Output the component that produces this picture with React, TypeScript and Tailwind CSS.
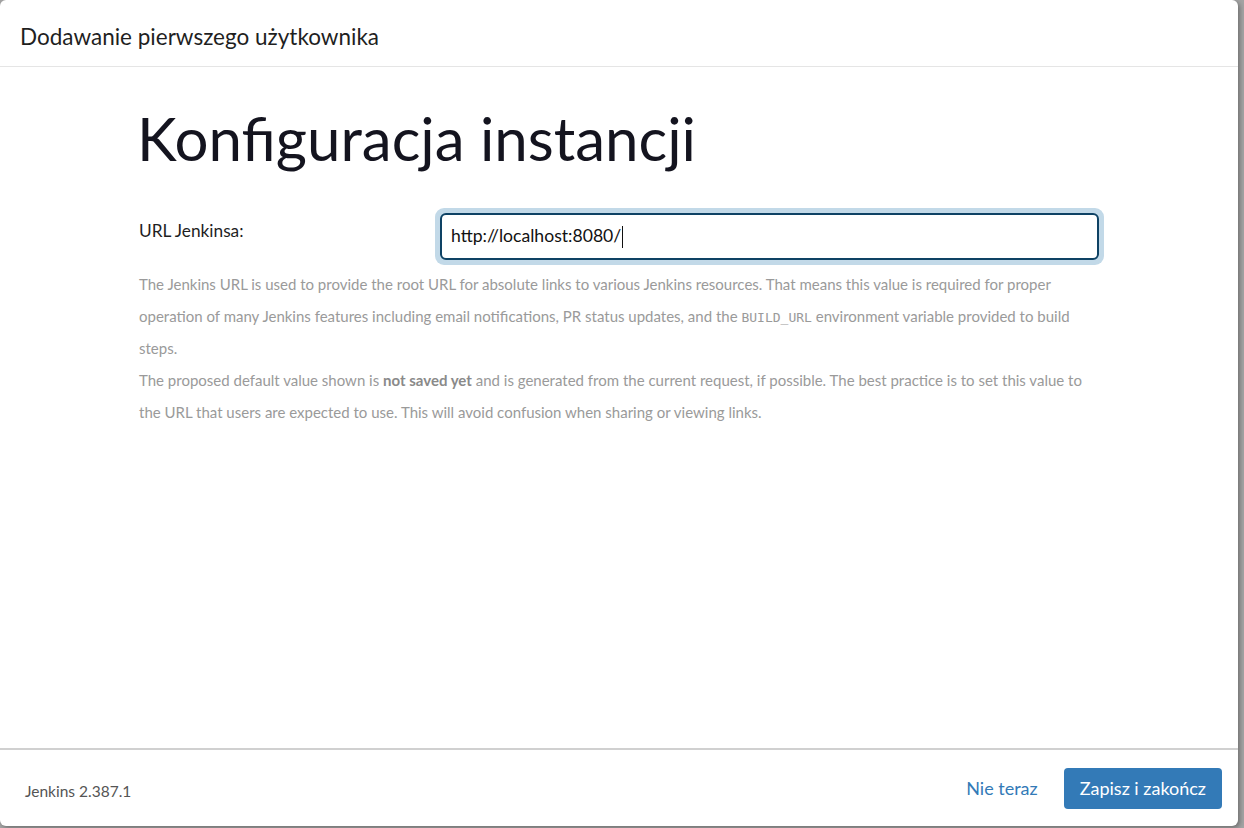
export default function App() {
  return (
    <div
      className="h-[828px] w-[1244px] overflow-hidden bg-[#a3a3a3]"
      style={{ fontFamily: '"Lato", "Open Sans", sans-serif' }}
    >
      <div className="flex h-[826px] w-[1238px] flex-col rounded-md bg-white shadow-[2px_2px_4px_rgba(0,0,0,0.3)]">
        <div className="flex h-[67px] items-center border-b border-[#e5e5e5] pl-[20px] pt-[7px]">
          <h4 className="text-[22.5px] text-[#1f1f1f]">Dodawanie pierwszego użytkownika</h4>
        </div>

        <div className="flex-1 pl-[137px] pt-[31px]">
          <h1 className="text-[60px] leading-[80px] text-[#14141f]">Konfiguracja instancji</h1>

          <div className="mt-[30px] flex w-[967px] items-start">
            <label className="w-[298px] pl-[2px] pt-[10px] text-[17.3px] text-[#1f1f1f]">URL Jenkinsa:</label>
            <div className="flex-1 rounded-[9px] bg-[#c2d9e8] p-[5px]">
              <div className="flex h-[47px] items-center rounded-[6px] border-2 border-[#0e4264] bg-white px-[9px] text-[17.6px] text-[#111]">
                http://localhost:8080/
                <span className="ml-[1px] h-[22px] w-[1px] bg-[#111]" />
              </div>
            </div>
          </div>

          <div className="mt-[3px] w-[952px] pl-[2px] text-[15px] leading-[32px] text-[#9a9a9a]">
            <p>
              The Jenkins URL is used to provide the root URL for absolute links to various Jenkins resources. That
              means this value is required for proper operation of many Jenkins features including email
              notifications, PR status updates, and the{" "}
              <code className="font-['DejaVu_Sans_Mono',monospace] text-[13px] leading-none">BUILD_URL</code>{" "}
              environment variable provided to build steps.
            </p>
            <p>
              The proposed default value shown is <strong className="font-bold text-[#8a8a8a]">not saved yet</strong>{" "}
              and is generated from the current request, if possible. The best practice is to set this value to the URL
              that users are expected to use. This will avoid confusion when sharing or viewing links.
            </p>
          </div>
        </div>

        <div className="flex h-[78px] items-center justify-between border-t-2 border-[#d0d0d0] pl-[25px] pr-[16px]">
          <span className="mt-[7px] text-[15.5px] text-[#555]">Jenkins 2.387.1</span>
          <div className="flex items-center gap-[26px]">
            <a className="text-[18px] text-[#337ab7]">Nie teraz</a>
            <button
              type="button"
              className="h-[41px] rounded-[4px] bg-[#337ab7] px-[16px] text-[18px] text-white"
            >
              Zapisz i zakończ
            </button>
          </div>
        </div>
      </div>
    </div>
  );
}
